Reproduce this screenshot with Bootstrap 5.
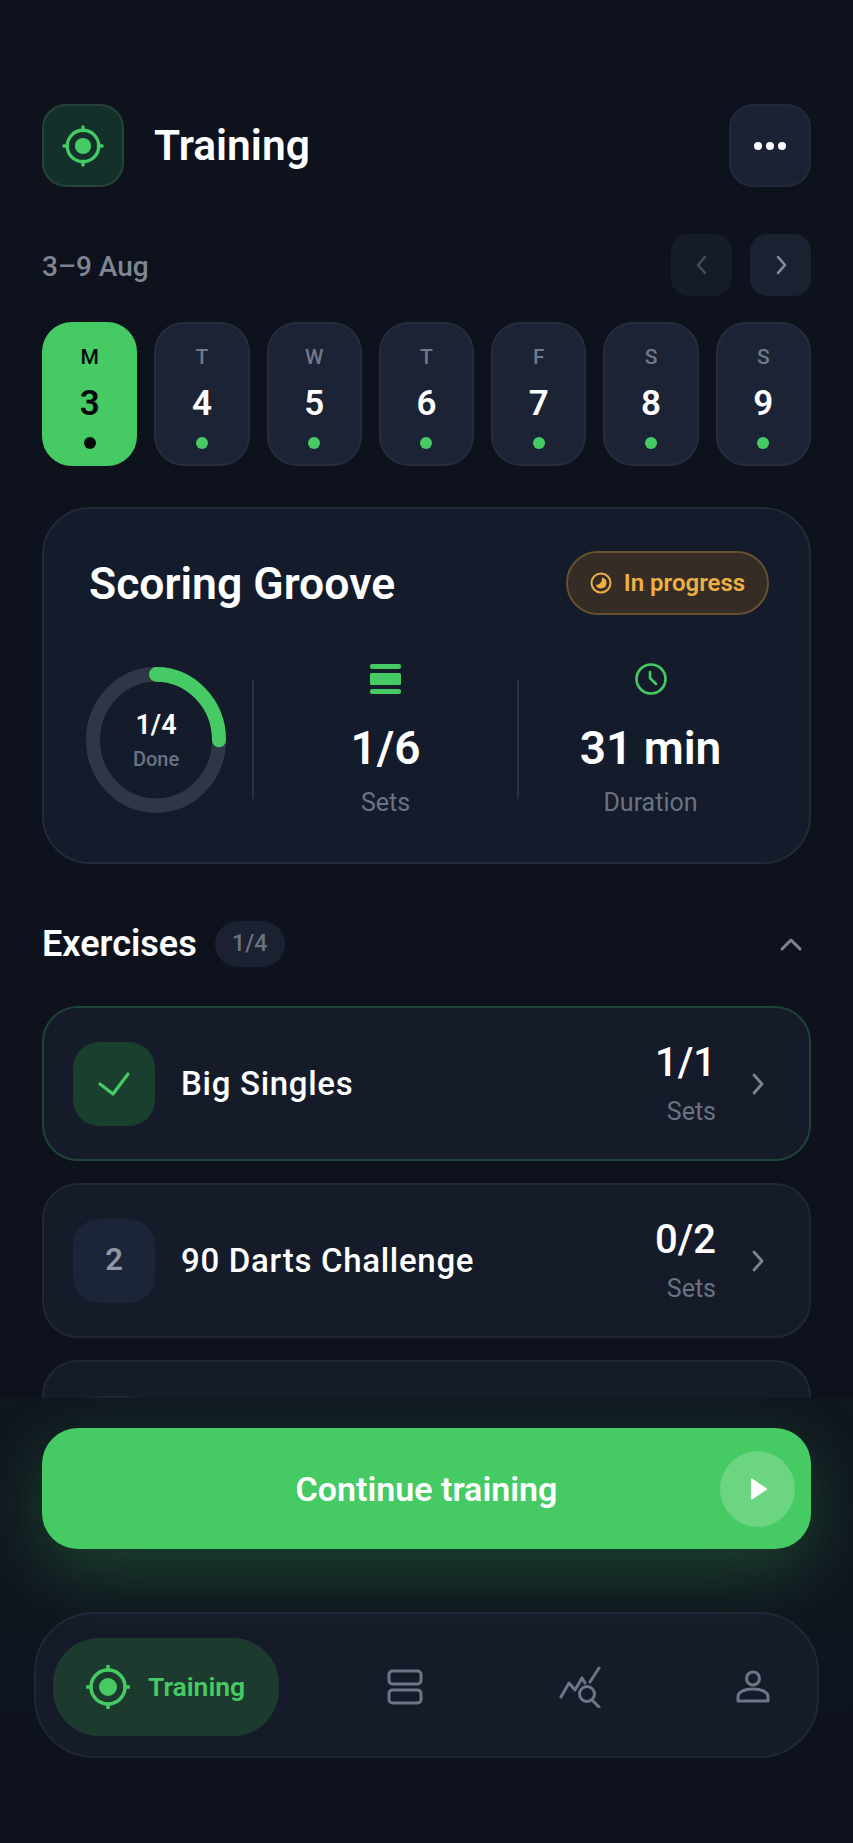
<!DOCTYPE html>
<html lang="en">
<head>
    <meta charset="UTF-8">
    <meta name="viewport" content="width=device-width, initial-scale=1">
    <title>Training</title>
    <link rel="stylesheet" href="https://cdn.jsdelivr.net/npm/bootstrap@5.3.0/dist/css/bootstrap.min.css">
    <style>
        html, body { height: 100%; }
        body { background: #0d121c; font-family: Roboto, "Liberation Sans", sans-serif; color: #fff; overflow: hidden; }
        .app { width: 853px; height: 1843px; padding-top: 104px; }
        .pad { padding: 0 42px; }

        .head-icon { width: 82px; height: 83px; border-radius: 24px; background: #14302a; border: 2px solid #27423b; }
        .head-title { font-size: 42.5px; font-weight: 600; margin: 2px 0 0 30px; line-height: 1; }
        .more-btn { width: 82px; height: 83px; border-radius: 24px; background: #1b2233; border: 2px solid #222a3a; padding: 0; gap: 4px; }
        .more-btn span { width: 8px; height: 8px; border-radius: 50%; background: #fff; }

        .date-row { margin-top: 47px; height: 62px; }
        .date-txt { font-size: 28px; font-weight: 500; color: #7f8592; margin-top: 3px; }
        .wk-btn { width: 61px; height: 62px; border-radius: 17px; background: #1a2130; border: 0; padding: 0; }
        .wk-btn.off { background: #151b28; }
        .wk-gap { gap: 18px; }

        .days { margin-top: 26px; gap: 17px; }
        .day { flex: 1 1 0; height: 144px; border-radius: 30px; background: #1c2334; border: 2px solid #252c3b; padding-top: 20px; }
        .day b { font-size: 21px; font-weight: 500; color: #727887; line-height: 26px; }
        .day strong { font-size: 35px; font-weight: 600; line-height: 40px; margin-top: 14px; }
        .day i { width: 12px; height: 12px; border-radius: 50%; background: #46ca63; margin-top: 13px; }
        .day.on { background: #46ca63; border-color: #46ca63; color: #05090c; }
        .day.on b { color: #05090c; }
        .day.on i { background: #05090c; }

        .sum-card { margin: 41px 42px 0; height: 357px; border-radius: 48px; background: #141c2b; border: 2px solid #222a38; color: #fff; }
        .sum-head { padding: 42px 40px 0 45px; height: 142px; }
        .sum-title { font-size: 44.5px; font-weight: 600; margin: 11px 0 0; line-height: 1; }
        .state-pill { height: 64px; width: 203px; border-radius: 32px; background: #352d25; border: 2px solid #66502f; color: #eeb043; font-size: 24px; font-weight: 600; gap: 12px; }
        .stat-wrap { margin-top: 15px; padding-right: 27px; }
        .ring-col { padding: 0 25px 0 41px; }
        .ring-num { font-size: 27px; font-weight: 600; line-height: 32px; }
        .ring-lbl { font-size: 20px; font-weight: 500; color: #6b7282; line-height: 26px; margin-top: 5px; }
        .stat { flex: 1 1 0; height: 119px; margin-top: 14px; }
        .stat + .stat, .ring-col + .stat { border-left: 2px solid #2a3140; }
        .stat-in { margin-top: -16px; }
        .stat-ic { height: 30px; }
        .stat-val { font-size: 46px; font-weight: 600; line-height: 54px; margin-top: 27px; }
        .stat-lbl { font-size: 25px; color: #6b7282; line-height: 30px; margin-top: 13px; }

        .ex-head { margin-top: 57px; height: 46px; }
        .ex-title { font-size: 36px; font-weight: 600; margin: 0; line-height: 1; }
        .ex-count { width: 70px; height: 46px; border-radius: 23px; background: #1b2130; color: #6b7282; font-size: 23px; font-weight: 500; margin-left: 18px; }

        .ex-list { margin-top: 39px; height: 392px; overflow: hidden; gap: 22px; padding: 0 42px; }
        .ex-row { flex: 0 0 155px; border-radius: 36px; background: #151b29; border: 2px solid #202736; color: #fff; padding: 0 44px 0 29px; }
        .ex-row.done { border-color: #1f4239; }
        .ex-num { width: 82px; height: 84px; border-radius: 26px; background: #1c2438; color: #9097a6; font-size: 31px; font-weight: 600; }
        .ex-row.done .ex-num { background: #1a3f2e; }
        .ex-name { font-size: 33px; font-weight: 500; margin-left: 26px; letter-spacing: .7px; }
        .ex-val { font-size: 40px; font-weight: 500; line-height: 46px; }
        .ex-lbl { font-size: 25px; color: #6b7282; line-height: 30px; margin-top: 11px; }
        .ex-side { margin-right: 35px; }

        .dock { background: linear-gradient(#10171f, #0f151e 60%, #0d121c 82%); padding: 30px 42px 0; height: 445px; overflow: hidden; }
        .go-btn { height: 121px; border-radius: 36px; background: #46ca63; border: 0; color: #fff; font-size: 34px; font-weight: 600; width: 100%; padding-top: 8px; box-shadow: 0 22px 70px rgba(70, 202, 99, .26); }
        .go-btn:hover, .go-btn:active { background: #46ca63; color: #fff; }
        .go-play { width: 75px; height: 76px; border-radius: 50%; background: #6bd582; right: 16px; top: 23px; }
        .tabs { margin: 63px -8px 0; height: 146px; border-radius: 60px; background: #151b29; border: 2px solid #202736; padding: 3px 47px 0 17px; }
        .tab-on { width: 226px; height: 98px; border-radius: 46px; background: #1d3a2f; color: #46ca63; font-size: 26.5px; font-weight: 600; gap: 18px; padding-left: 33px; }
        .tab-rest { margin-left: 108px; }
    </style>
</head>
<body>
    <div class="app">
        <div class="pad d-flex align-items-center">
            <div class="head-icon d-flex align-items-center justify-content-center">
                <svg width="42" height="42" viewBox="0 0 44 44" fill="none" stroke="#46ca63" stroke-width="3.5" stroke-linecap="round"><circle cx="22" cy="22" r="16.5"/><path d="M22 2v4M22 38v4M2 22h4M38 22h4"/><circle cx="22" cy="22" r="8.5" fill="#46ca63" stroke="none"/></svg>
            </div>
            <h1 class="head-title">Training</h1>
            <button class="more-btn btn ms-auto d-flex align-items-center justify-content-center"><span></span><span></span><span></span></button>
        </div>

        <div class="date-row pad d-flex align-items-center">
            <span class="date-txt">3–9 Aug</span>
            <div class="ms-auto d-flex wk-gap">
                <button class="wk-btn off btn d-flex align-items-center justify-content-center"><svg width="14" height="22" viewBox="0 0 14 22" fill="none" stroke="#454c5c" stroke-width="2.5" stroke-linecap="round" stroke-linejoin="round"><path d="M10 3 3 11l7 8"/></svg></button>
                <button class="wk-btn btn d-flex align-items-center justify-content-center"><svg width="14" height="22" viewBox="0 0 14 22" fill="none" stroke="#8a90a0" stroke-width="2.5" stroke-linecap="round" stroke-linejoin="round"><path d="m4 3 7 8-7 8"/></svg></button>
            </div>
        </div>

        <div class="days pad d-flex">
            <div class="day on d-flex flex-column align-items-center"><b>M</b><strong>3</strong><i></i></div>
            <div class="day d-flex flex-column align-items-center"><b>T</b><strong>4</strong><i></i></div>
            <div class="day d-flex flex-column align-items-center"><b>W</b><strong>5</strong><i></i></div>
            <div class="day d-flex flex-column align-items-center"><b>T</b><strong>6</strong><i></i></div>
            <div class="day d-flex flex-column align-items-center"><b>F</b><strong>7</strong><i></i></div>
            <div class="day d-flex flex-column align-items-center"><b>S</b><strong>8</strong><i></i></div>
            <div class="day d-flex flex-column align-items-center"><b>S</b><strong>9</strong><i></i></div>
        </div>

        <div class="sum-card card">
            <div class="sum-head d-flex justify-content-between align-items-start">
                <h2 class="sum-title">Scoring Groove</h2>
                <div class="state-pill d-flex align-items-center justify-content-center">
                    <svg width="22" height="22" viewBox="0 0 22 22"><circle cx="11" cy="11" r="9.5" fill="none" stroke="#eeb043" stroke-width="2"/><path d="M12 5.500a5.500 5.500 0 1 1-6.200 7.200c3.600.6 6.600-2.700 6.200-7.200z" fill="#eeb043"/></svg>
                    <span>In progress</span>
                </div>
            </div>
            <div class="d-flex stat-wrap">
                <div class="ring-col">
                    <div class="position-relative">
                        <svg class="d-block" width="142" height="148" viewBox="0 0 142 142" preserveAspectRatio="none" fill="none" stroke-width="14"><circle cx="71" cy="71" r="63" stroke="#2f3646"/><path d="M71 8a63 63 0 0 1 63 63" stroke="#46ca63" stroke-linecap="round"/></svg>
                        <div class="position-absolute top-50 start-50 translate-middle text-center">
                            <div class="ring-num">1/4</div>
                            <div class="ring-lbl">Done</div>
                        </div>
                    </div>
                </div>
                <div class="stat text-center">
                    <div class="stat-in">
                        <div class="stat-ic d-flex align-items-center justify-content-center">
                            <svg width="31" height="30" viewBox="0 0 31 30" fill="#46ca63"><rect width="31" height="5" rx="2"/><rect y="9" width="31" height="12" rx="1.500"/><rect y="25" width="31" height="5" rx="2"/></svg>
                        </div>
                        <div class="stat-val">1/6</div>
                        <div class="stat-lbl">Sets</div>
                    </div>
                </div>
                <div class="stat text-center">
                    <div class="stat-in">
                        <div class="stat-ic d-flex align-items-center justify-content-center">
                            <svg width="32" height="32" viewBox="0 0 32 32" fill="none" stroke="#46ca63" stroke-width="2.600" stroke-linecap="round" stroke-linejoin="round"><circle cx="16" cy="16" r="14.500"/><path d="M15 9v6l6 6"/></svg>
                        </div>
                        <div class="stat-val">31 min</div>
                        <div class="stat-lbl">Duration</div>
                    </div>
                </div>
            </div>
        </div>

        <div class="ex-head pad d-flex align-items-center">
            <h2 class="ex-title">Exercises</h2>
            <span class="ex-count d-flex align-items-center justify-content-center">1/4</span>
            <svg class="ms-auto me-2" width="24" height="16" viewBox="0 0 24 16" fill="none" stroke="#7d8392" stroke-width="3" stroke-linecap="round" stroke-linejoin="round"><path d="m3 13 9-9 9 9"/></svg>
        </div>

        <div class="ex-list d-flex flex-column">
            <div class="ex-row done d-flex align-items-center">
                <div class="ex-num d-flex align-items-center justify-content-center"><svg width="34" height="26" viewBox="0 0 34 26" fill="none" stroke="#46ca63" stroke-width="3.200" stroke-linecap="round" stroke-linejoin="round"><path d="M3 13l13 10L31 3"/></svg></div>
                <span class="ex-name">Big Singles</span>
                <div class="ex-side ms-auto text-end"><div class="ex-val">1/1</div><div class="ex-lbl">Sets</div></div>
                <svg width="14" height="24" viewBox="0 0 14 24" fill="none" stroke="#7d8392" stroke-width="2.800" stroke-linecap="round" stroke-linejoin="round"><path d="m3 3 8 9-8 9"/></svg>
            </div>
            <div class="ex-row d-flex align-items-center">
                <div class="ex-num d-flex align-items-center justify-content-center">2</div>
                <span class="ex-name">90 Darts Challenge</span>
                <div class="ex-side ms-auto text-end"><div class="ex-val">0/2</div><div class="ex-lbl">Sets</div></div>
                <svg width="14" height="24" viewBox="0 0 14 24" fill="none" stroke="#7d8392" stroke-width="2.800" stroke-linecap="round" stroke-linejoin="round"><path d="m3 3 8 9-8 9"/></svg>
            </div>
            <div class="ex-row d-flex align-items-center">
                <div class="ex-num"></div>
            </div>
        </div>

        <div class="dock">
            <button class="go-btn btn position-relative">Continue training
                <span class="go-play position-absolute d-flex align-items-center justify-content-center">
                    <svg width="20" height="22" viewBox="0 0 20 22"><path d="M3 1.500v19a1 1 0 0 0 1.500.8l14-9.500a1 1 0 0 0 0-1.600L4.500.7A1 1 0 0 0 3 1.500z" fill="#fff"/></svg>
                </span>
            </button>
            <nav class="tabs d-flex align-items-center">
                <div class="tab-on d-flex align-items-center">
                    <svg width="44" height="44" viewBox="0 0 44 44" fill="none" stroke="#46ca63" stroke-width="3.500" stroke-linecap="round"><circle cx="22" cy="22" r="17"/><path d="M22 1v4M22 39v4M1 22h4M39 22h4"/><circle cx="22" cy="22" r="9" fill="#46ca63" stroke="none"/></svg>
                    <span>Training</span>
                </div>
                <div class="tab-rest flex-grow-1 d-flex align-items-center justify-content-between">
                    <svg width="36" height="36" viewBox="0 0 36 36" fill="none" stroke="#6f7585" stroke-width="3"><rect x="2" y="2" width="32" height="13" rx="3.500"/><rect x="2" y="21" width="32" height="13" rx="3.500"/></svg>
                    <svg width="42" height="42" viewBox="0 0 42 42" fill="none" stroke="#6f7585" stroke-width="3" stroke-linecap="round" stroke-linejoin="round"><path d="M2 31l8-14 6 7 7-12 3 5M31 16 40 2"/><circle cx="28" cy="28" r="7.500"/><path d="m34 35 6 6"/></svg>
                    <svg width="34" height="34" viewBox="0 0 34 34" fill="none" stroke="#6f7585" stroke-width="3"><circle cx="17" cy="8.500" r="6.500"/><path d="M2 31v-4c0-5 6-8 15-8s15 3 15 8v4z" stroke-linejoin="round"/></svg>
                </div>
            </nav>
        </div>
    </div>
    <script src="https://cdn.jsdelivr.net/npm/bootstrap@5.3.0/dist/js/bootstrap.bundle.min.js"></script>
</body>
</html>
